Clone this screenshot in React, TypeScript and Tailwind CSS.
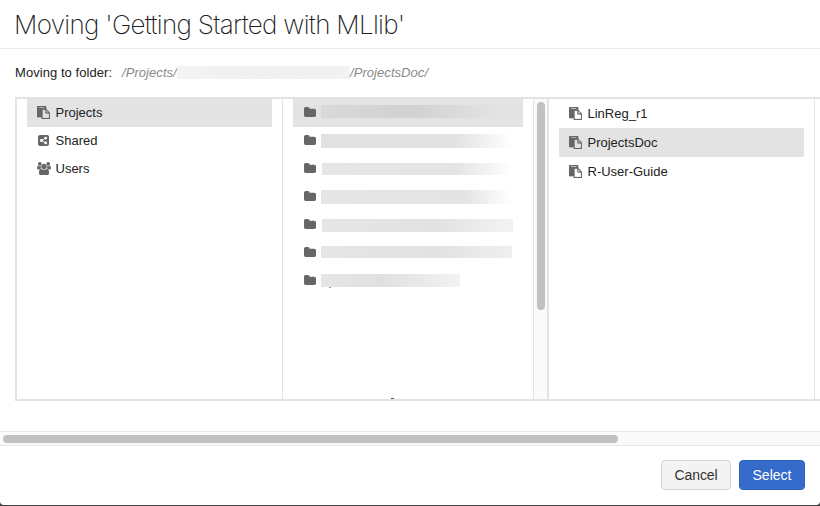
import type { ReactNode } from "react";

function PasteIcon() {
  return (
    <svg viewBox="0 0 1792 1792" className="mb-px h-[13px] w-[13px] shrink-0 fill-[#666] stroke-[#666] stroke-[30]">
      <path d="M768 1664h896v-640h-416q-40 0-68-28t-28-68v-416h-384v1152zm256-1440v-64q0-13-9.5-22.5t-22.5-9.5h-704q-13 0-22.5 9.5t-9.5 22.5v64q0 13 9.5 22.5t22.5 9.5h704q13 0 22.5-9.5t9.5-22.5zm256 672h299l-299-299v299zm512 128v672q0 40-28 68t-68 28h-960q-40 0-68-28t-28-68v-160h-544q-40 0-68-28t-28-68v-1344q0-40 28-68t68-28h1088q40 0 68 28t28 68v328q21 13 36 28l408 408q28 28 48 76t20 88z" />
    </svg>
  );
}

function SharedIcon() {
  return (
    <svg viewBox="0 0 12 12" className="mb-px ml-px h-[11px] w-[11px] shrink-0">
      <rect width="12" height="12" rx="2.2" fill="#666" />
      <path d="M8.3 3.4 3.7 6l4.6 2.6" fill="none" stroke="white" strokeWidth="1" />
      <circle cx="8.4" cy="3.4" r="1.55" fill="white" />
      <circle cx="3.6" cy="6" r="1.55" fill="white" />
      <circle cx="8.4" cy="8.6" r="1.55" fill="white" />
    </svg>
  );
}

function UsersIcon() {
  return (
    <svg viewBox="0 0 1920 1792" className="mb-0.5 h-[13px] w-[14px] shrink-0 fill-[#666]">
      <path d="M593 896q-162 5-265 128h-134q-82 0-138-40.5t-56-118.5q0-353 124-353 6 0 43.5 21t97.5 42.5 119 21.5q67 0 133-23-5 37-5 66 0 139 81 256zm1071 637q0 120-73 189.5t-194 69.5h-874q-121 0-194-69.5t-73-189.5q0-53 3.5-103.5t14-109 26.5-108.5 43-97.5 62-81 85.5-53.5 111.5-20q10 0 43 21.5t73 48 107 48 135 21.5 135-21.5 107-48 73-48 43-21.5q61 0 111.5 20t85.5 53.5 62 81 43 97.5 26.5 108.5 14 109 3.5 103.5zm-1024-1277q0 106-75 181t-181 75-181-75-75-181 75-181 181-75 181 75 75 181zm704 384q0 159-112.5 271.5t-271.5 112.5-271.5-112.5-112.5-271.5 112.5-271.5 271.5-112.5 271.5 112.5 112.5 271.5zm576 225q0 78-56 118.5t-138 40.5h-134q-103-123-265-128 81-117 81-256 0-29-5-66 66 23 133 23 59 0 119-21.5t97.5-42.5 43.5-21q124 0 124 353zm-128-609q0 106-75 181t-181 75-181-75-75-181 75-181 181-75 181 75 75 181z" />
    </svg>
  );
}

function FolderIcon() {
  return (
    <svg viewBox="64 128 1664 1408" preserveAspectRatio="none" className="h-[10px] w-3 shrink-0 fill-[#666]">
      <path d="M1728 608v704q0 92-66 158t-158 66h-1216q-92 0-158-66t-66-158v-960q0-92 66-158t158-66h320q92 0 158 66t66 158v32h672q92 0 158 66t66 158z" />
    </svg>
  );
}

function Item({ icon, label, className }: { icon: ReactNode; label: string; className: string }) {
  return (
    <div className={`flex items-center pl-2.5 ${className}`}>
      <span className="flex w-[18.5px] items-center">{icon}</span>
      <span className="text-[13px] leading-4">{label}</span>
    </div>
  );
}

const hiddenFolders = [
  "mt-1.5 h-[13px] w-[177px] from-[#d9d9d9] via-[#d1d1d1] via-50% to-[#e3e3e3]",
  "mt-[7px] h-3.5 w-[191px] from-[#e1e1e1] via-[#e2e2e2] via-70% to-white",
  "mt-2 ml-px h-3 w-[191px] from-[#e6e6e6] via-[#e4e4e4] via-70% to-white",
  "mt-[7px] h-3.5 w-[191px] from-[#e6e6e6] via-[#e4e4e4] via-75% to-white",
  "mt-2 ml-px h-[13px] w-[191px] from-[#e6e6e6] via-[#e2e2e2] via-60% to-[#f3f3f3]",
  "mt-[7px] h-3 w-[191px] from-[#e6e6e6] via-[#e2e2e2] via-60% to-[#efefef]",
  "mt-[7px] h-[13px] w-[139px] from-[#e6e6e6] via-[#e0e0e0] via-45% to-[#f3f3f3]",
];

export default function App() {
  return (
    <div className="h-[506px] w-[820px] overflow-hidden bg-[#444]">
      <div className="flex h-[505px] flex-col overflow-hidden rounded-b-[4px] bg-white font-['Liberation_Sans',Arial,sans-serif] text-[#222]">
        <header className="flex h-[49px] shrink-0 items-center border-b border-[#eaeaea] pl-[14px]">
          <h1 className="font-['Inter',sans-serif] text-[26px] font-extralight tracking-[-0.7px] whitespace-nowrap">
            Moving 'Getting Started with MLlib'
          </h1>
        </header>

        <div className="flex h-12 shrink-0 items-center pl-[15px] text-[13px] tracking-[0.06px]">
          <span className="w-[107px] whitespace-nowrap">Moving to folder:</span>
          <span className="w-[55px] text-[#888] italic">/Projects/</span>
          <span className="mb-0.5 h-[13px] w-[173px] bg-linear-to-r from-[#f3f3f3] via-[#f0f0f0] to-[#f2f2f2]" />
          <span className="text-[#888] italic">/ProjectsDoc/</span>
        </div>

        <div className="ml-[15px] flex h-[304px] shrink-0 border-y-2 border-l-2 border-[#e3e3e3]">
          <div className="w-[266px] shrink-0 border-r border-[#e3e3e3] px-2.5">
            <Item icon={<PasteIcon />} label="Projects" className="h-7 bg-[#e3e3e3]" />
            <Item icon={<SharedIcon />} label="Shared" className="h-7" />
            <Item icon={<UsersIcon />} label="Users" className="h-7" />
          </div>

          <div className="flex w-[266px] shrink-0 border-r-2 border-[#e3e3e3]">
            <div className="flex w-[250px] flex-col px-2.5">
              {hiddenFolders.map((bar, i) => (
                <div key={i} className={`flex h-7 shrink-0 items-start pl-[11px] ${i === 0 ? "bg-[#e3e3e3]" : ""}`}>
                  <span className="mt-2 mr-[5px] flex">
                    <FolderIcon />
                  </span>
                  <span className={`bg-linear-to-r ${bar}`} />
                </div>
              ))}
              <div className="-mt-2 ml-9 h-px w-0.5 shrink-0 bg-[#999]" />
              <div className="mt-auto ml-[98px] h-px w-[3px] bg-[#555]" />
            </div>
            <div className="flex flex-1 justify-center border-l border-[#e3e3e3] bg-[#fafafa] pt-[3px]">
              <div className="h-[208px] w-2 rounded-full bg-[#c1c1c1]" />
            </div>
          </div>

          <div className="w-[266px] shrink-0 border-r border-[#e3e3e3] px-2.5">
            <Item icon={<PasteIcon />} label="LinReg_r1" className="h-[29px]" />
            <Item icon={<PasteIcon />} label="ProjectsDoc" className="h-[29px] bg-[#e3e3e3]" />
            <Item icon={<PasteIcon />} label="R-User-Guide" className="h-[29px]" />
          </div>
        </div>

        <div className="mt-[30px] flex h-[15px] shrink-0 items-center border-y border-[#e7e7e7] bg-[#fafafa] pl-[3px]">
          <div className="h-2 w-[615px] rounded-full bg-[#c1c1c1]" />
        </div>

        <footer className="flex flex-1 items-start justify-end gap-2 pt-3.5 pr-[15px] text-sm">
          <button className="h-[30px] w-[70px] rounded-[4px] border border-[#d5d5d5] bg-[#f3f3f3] tracking-[-0.1px] text-[#333]">
            Cancel
          </button>
          <button className="h-[30px] w-[66px] rounded-[4px] border border-[#2c62bd] bg-[#356bcb] text-white">
            Select
          </button>
        </footer>
      </div>
    </div>
  );
}
